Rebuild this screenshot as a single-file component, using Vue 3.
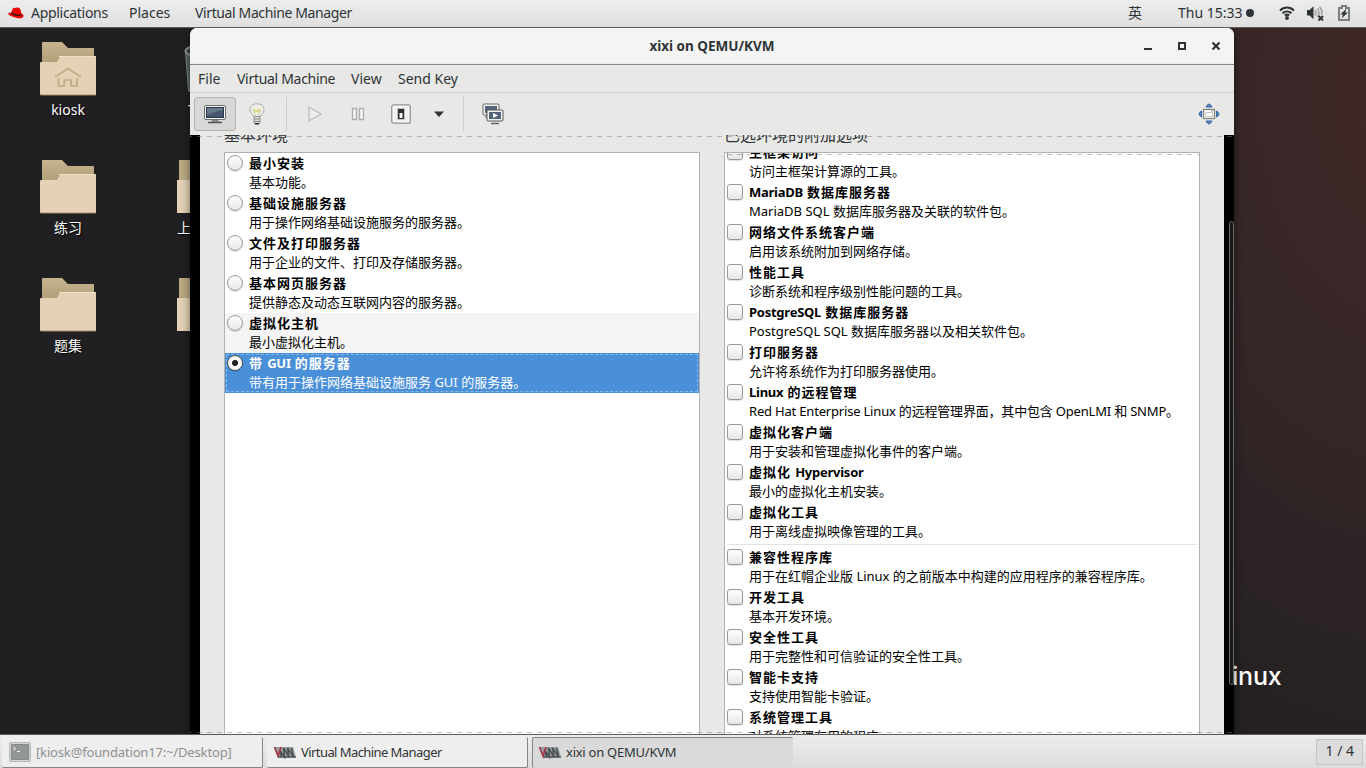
<template>
  <div class="desktop">
    <header class="topbar">
      <svg class="topbar__hat" width="16" height="14" viewBox="0 0 16 14">
        <path d="M3.2 6.8 4.700 2.700C5 1.700 6 1.600 7 1.900c.8.2 1.200 0 2-.3 1.800-.5 3 .4 3.400 2l.9 3.700c1.300.6 2.300 1.600 2.200 2.800-.2 2-2.600 2.600-5.400 2.100C6.400 11.700 1 9.900.3 7.800.1 6.700 1.500 6.500 3.200 6.800Z" fill="#e00" />
        <path d="M3.400 6c1.800 2.200 6 3.300 9.200 2.600l.7-.8.3 1.300c-2.500 2-9 .1-10.600-1.900Z" fill="#161616" />
      </svg>
      <span class="topbar__apps">Applications</span>
      <span class="topbar__places">Places</span>
      <span class="topbar__current">Virtual Machine Manager</span>
      <span class="topbar__input">英</span>
      <span class="topbar__clock">Thu 15:33</span>
      <i class="topbar__dot" />
      <svg class="topbar__wifi" width="16" height="16" viewBox="0 0 16 16" fill="none" stroke="#2e3436" stroke-width="2">
        <path d="M1 5.600C5 1.600 11 1.600 15 5.600M3.500 8.300c2.600-2.500 6.400-2.500 9 0M5.800 10.500c1.400-1.100 3-1.100 4.400 0" />
        <circle cx="8" cy="13" r="1.900" fill="#2e3436" stroke="none" />
      </svg>
      <svg class="topbar__volume" width="17" height="16" viewBox="0 0 17 16" fill="none">
        <path d="M0 5h2.500L6.500 1.200v13L2.500 10.500H0Z" fill="#2e3436" />
        <path d="M8 5.200c1 1.500 1 3.600 0 5.200M10.300 3.500c2 2.600 2 6 .2 8.500M12.500 1.800c2.600 3 2.800 5.700 2 8" stroke="#a5a7a7" stroke-width="1.800" />
        <path d="m11.500 11 4.500 4.500m0-4.500-4.500 4.500" stroke="#2e3436" stroke-width="2" />
      </svg>
      <svg class="topbar__battery" width="12" height="16" viewBox="0 0 12 16">
        <path d="M1 3h3V1h4v2h3v12H1Z" fill="none" stroke="#7b7f7f" stroke-width="2" />
        <path d="M8.500 3.500 2.300 9.500H5L3.500 13.500 10 7.500H7.200Z" fill="#2e3436" />
      </svg>
    </header>

    <main class="workspace">
      <span class="wallpaper-word">inux</span>
      <figure class="trash">
        <svg width="42" height="54" viewBox="0 0 42 54">
          <path d="m1.500 7 3 40q16 5 33 0l3-40Z" fill="#59645f" stroke="#7c8884" />
          <path d="m10 12 2 32m7-30v32m9-32-1 32m7-34-2 32" stroke="#4b5753" />
          <ellipse cx="21" cy="7" rx="19.500" ry="6" fill="#3a4341" stroke="#8e9895" stroke-width="2" />
        </svg>
        <figcaption>Trash</figcaption>
      </figure>
      <div class="icons">
        <figure v-for="icon in icons" :key="icon.label" class="icon">
          <svg width="58" height="56" viewBox="0 0 58 56">
            <defs>
              <linearGradient id="back" x2="0" y2="1">
                <stop stop-color="#c6b48f" /><stop offset=".35" stop-color="#b5a37d" /><stop offset="1" stop-color="#9f8b67" />
              </linearGradient>
            </defs>
            <path d="M3 1.500Q3 1 4 1h19l6 6h25.500q.5 0 .5.500V50H3Z" fill="url(#back)" />
            <path d="M1 22q0-1 1-1h16l3-5.300q.4-.7 1.500-.700H56q1 0 1 1v37.500q0 .5-1 .5H2q-1 0-1-1Z" fill="#e4d1b6" />
            <path d="M1.500 54h55" stroke="#aa8a65" />
            <path d="M20 15.500h36.500" stroke="#f2dfc4" />
            <g v-if="icon.home" fill="none" stroke="#c1aa88" stroke-width="1.700">
              <path d="m16 36 13-8.500L42 36M19.500 37v8h5.700v-6h7v6H38v-8" />
            </g>
          </svg>
          <figcaption>{{ icon.label }}</figcaption>
        </figure>
      </div>
      <div class="icons icons--second">
        <figure v-for="icon in hiddenIcons" :key="icon" class="icon">
          <svg width="58" height="56" viewBox="0 0 58 56">
            <path d="M3 1h20l6 6h26v43H3Z" fill="#bcaa84" />
            <path d="M1 21h17l4-6h35v39H1Z" fill="#e4d1b6" />
          </svg>
          <figcaption>{{ icon }}</figcaption>
        </figure>
      </div>

      <section class="window">
        <div class="titlebar">
          <strong>xixi on QEMU/KVM</strong>
          <div class="titlebar__buttons">
            <svg width="10" height="10" viewBox="0 0 10 10"><path d="M1 7h8v2H1Z" fill="#2e3436" /></svg>
            <svg width="10" height="10" viewBox="0 0 10 10"><path d="M2 2h6v6H2Z" fill="none" stroke="#2e3436" stroke-width="2" /></svg>
            <svg width="10" height="10" viewBox="0 0 10 10"><path d="m1.500 1.500 7 7m0-7-7 7" stroke="#2e3436" stroke-width="2.200" /></svg>
          </div>
        </div>
        <nav class="menubar">
          <span class="menubar__file">File</span>
          <span class="menubar__vm">Virtual Machine</span>
          <span class="menubar__view">View</span>
          <span class="menubar__key">Send Key</span>
        </nav>
        <div class="toolbar">
          <button class="tool tool--active">
            <svg width="24" height="22" viewBox="0 0 24 22">
              <rect x="1.500" y="2.500" width="21" height="14" rx="1.500" fill="#f4f4f2" stroke="#6d706d" />
              <rect x="3.500" y="4.500" width="17" height="10" fill="#465970" stroke="#26364d" />
              <path d="M4 5h16v2Q12 8 4 12Z" fill="#6a7a8d" />
              <path d="M9 17h6l1 2H8Z" fill="#8d908d" /><path d="M5 19.500h14" stroke="#555855" stroke-width="1.500" />
            </svg>
          </button>
          <button class="tool tool--bulb">
            <svg width="16" height="22" viewBox="0 0 16 22">
              <path d="M4.500 13.500C4 11 1 10.500 1 6.800 1 3 4 .8 8 .8s7 2.200 7 6c0 3.700-3 4.200-3.500 6.700Z" fill="#efefe9" stroke="#aaa" />
              <path d="M3.500 5q4.500 3.500 9 0L10 9.500H6Z" fill="#f4e865" /><path d="m6.500 13-2-6q3.500 3 7 0l-2 6" fill="none" stroke="#c8c8b8" />
              <path d="M5 13.500h6V20q-3 2-6 0Z" fill="#dededc" stroke="#92948f" /><path d="M5 16h6M5 18.500h6" stroke="#888a85" />
              <path d="M6 20.700h4" stroke="#333" stroke-width="1.500" />
            </svg>
          </button>
          <i class="toolbar__rule" />
          <svg class="toolbar__play" width="16" height="16" viewBox="0 0 16 16"><path d="M2 1.200 14 8 2 14.800Z" fill="#eee" stroke="#bdbebb" stroke-width="1.300" /></svg>
          <svg class="toolbar__pause" width="14" height="14" viewBox="0 0 14 14"><path d="M1.500 1.500h4v11h-4ZM8.500 1.500h4v11h-4Z" fill="#f3f3f2" stroke="#acaeab" stroke-width="1.300" /></svg>
          <svg class="toolbar__power" width="20" height="20" viewBox="0 0 20 20">
            <rect x=".8" y=".8" width="18.400" height="18.400" rx="2" fill="#fff" stroke="#8f918c" stroke-width="1.300" />
            <rect x="2.500" y="2.500" width="15" height="15" fill="#f0f0ee" />
            <path d="M6 4h8v12H6Z" fill="#c4c5c2" /><path d="M7 5h6v10H7Z" fill="#2c2e2c" /><path d="M8.500 9h3v5h-3Z" fill="#f5f5f3" />
          </svg>
          <svg class="toolbar__arrow" width="10" height="6" viewBox="0 0 10 6"><path d="M0 .5h10L5 6Z" fill="#2e3436" /></svg>
          <i class="toolbar__rule toolbar__rule--last" />
          <svg class="toolbar__clone" width="22" height="22" viewBox="0 0 22 22">
            <rect x="1" y="1" width="16" height="11" rx="1" fill="#f4f4f2" stroke="#666966" />
            <path d="M3 3h12v7H3Z" fill="#53657a" /><path d="M3 14h5M5 12v2" stroke="#666966" />
            <rect x="5" y="7" width="16" height="11" rx="1" fill="#f4f4f2" stroke="#555855" />
            <path d="M7 9h12v7H7Z" fill="#53657a" /><path d="m11 10 5 2.500-5 2.500Z" fill="#fff" />
            <path d="M9 20.500h8" stroke="#666966" stroke-width="1.300" /><path d="M11 18.500h4" stroke="#999" />
          </svg>
          <svg class="toolbar__fullscreen" width="22" height="22" viewBox="0 0 22 22">
            <g fill="#5f87ba" stroke="#3465a4">
              <path d="M8 4q3-6 6 0ZM8 18q3 6 6 0ZM3.500 8v6q-5-3 0-6ZM18.500 8v6q5-3 0-6Z" />
            </g>
            <rect x="5.500" y="6.500" width="11" height="9" fill="#fff" stroke="#82847f" stroke-width="1.300" />
            <path d="M7.500 9.500h7v4h-7Z" fill="#fff" stroke="#c7c8c2" /><path d="M13 8h2" stroke="#aaa" />
          </svg>
        </div>

        <div class="display">
          <div class="installer">
            <div class="pane">
              <h2>基本环境</h2>
              <ul class="list">
                <li
                  v-for="item in environments"
                  :key="item.name"
                  class="row"
                  :class="{ 'row--hover': item.hover, 'row--selected': item.selected }"
                >
                  <i class="mark mark--radio" />
                  <b><span v-for="(part, i) in splitLatin(item.name)" :key="i" :class="{ latin: part.latin }">{{ part.text }}</span></b>
                  <p>{{ item.text }}</p>
                </li>
              </ul>
            </div>
            <div class="pane">
              <h2>已选环境的附加选项</h2>
              <ul class="list list--scrolled">
                <li
                  v-for="item in addons"
                  :key="item.name"
                  class="row"
                  :class="{ 'row--divided': item.divided, 'row--tight': item.tight }"
                >
                  <i class="mark" />
                  <b><span v-for="(part, i) in splitLatin(item.name)" :key="i" :class="{ latin: part.latin }">{{ part.text }}</span></b>
                  <p>{{ item.text }}</p>
                </li>
              </ul>
            </div>
          </div>
          <i class="scrollbar" />
          <i class="dashes" />
          <i class="dashes dashes--bottom" />
        </div>
      </section>
    </main>

    <footer class="taskbar">
      <div class="task task--minimized">
        <svg width="22" height="20" viewBox="0 0 22 20">
          <rect x=".7" y=".7" width="20.600" height="18.600" rx="1" fill="#e0e0df" stroke="#b9bab8" stroke-width="1.300" />
          <path d="M2.500 2.500h17v15h-17Z" fill="#929795" stroke="#858a88" />
          <path d="m4.500 5 2 1.500-2 1.500M8 9.500h3" fill="none" stroke="#fff" />
        </svg>
        <span>[kiosk@foundation17:~/Desktop]</span>
      </div>
      <div v-for="task in tasks" :key="task.title" class="task" :class="{ 'task--active': task.active }">
        <svg width="24" height="14" viewBox="0 0 24 14">
          <path d="m1 2 4 10h18L20 2Z" fill="#9a9ea0" />
          <path d="m8.500 12-2-7 5 7-1-9 5.500 9-1.500-9 6 9-2-9" fill="none" stroke="#4a5256" stroke-width="1.500" />
          <path d="M5 12h18" stroke="#4a4f52" stroke-width="1.500" />
          <path d="m1.500 2 3.500 9 3-9" fill="none" stroke="#a7394a" stroke-width="1.700" />
        </svg>
        <span>{{ task.title }}</span>
      </div>
      <span class="pager">1 / 4</span>
    </footer>
  </div>
</template>

<script setup>
const icons = [
  { label: 'kiosk', home: true },
  { label: '练习' },
  { label: '题集' },
];

const hiddenIcons = ['上课练习', '下载'];

const environments = [
  { name: '最小安装', text: '基本功能。' },
  { name: '基础设施服务器', text: '用于操作网络基础设施服务的服务器。' },
  { name: '文件及打印服务器', text: '用于企业的文件、打印及存储服务器。' },
  { name: '基本网页服务器', text: '提供静态及动态互联网内容的服务器。' },
  { name: '虚拟化主机', text: '最小虚拟化主机。', hover: true },
  { name: '带 GUI 的服务器', text: '带有用于操作网络基础设施服务 GUI 的服务器。', selected: true },
];

const addons = [
  { name: '主框架访问', text: '访问主框架计算源的工具。' },
  { name: 'MariaDB 数据库服务器', text: 'MariaDB SQL 数据库服务器及关联的软件包。' },
  { name: '网络文件系统客户端', text: '启用该系统附加到网络存储。' },
  { name: '性能工具', text: '诊断系统和程序级别性能问题的工具。' },
  { name: 'PostgreSQL 数据库服务器', text: 'PostgreSQL SQL 数据库服务器以及相关软件包。' },
  { name: '打印服务器', text: '允许将系统作为打印服务器使用。' },
  { name: 'Linux 的远程管理', text: 'Red Hat Enterprise Linux 的远程管理界面，其中包含 OpenLMI 和 SNMP。', tight: true },
  { name: '虚拟化客户端', text: '用于安装和管理虚拟化事件的客户端。' },
  { name: '虚拟化 Hypervisor', text: '最小的虚拟化主机安装。' },
  { name: '虚拟化工具', text: '用于离线虚拟映像管理的工具。' },
  { name: '兼容性程序库', text: '用于在红帽企业版 Linux 的之前版本中构建的应用程序的兼容程序库。', divided: true },
  { name: '开发工具', text: '基本开发环境。' },
  { name: '安全性工具', text: '用于完整性和可信验证的安全性工具。' },
  { name: '智能卡支持', text: '支持使用智能卡验证。' },
  { name: '系统管理工具', text: '对系统管理有用的程序。' },
];

const tasks = [
  { title: 'Virtual Machine Manager' },
  { title: 'xixi on QEMU/KVM', active: true },
];

// Latin words keep their own tracking inside the wider CJK titles
function splitLatin(text) {
  return text.match(/[ -~]+|[^ -~]+/g).map((part) => ({ text: part, latin: /^[ -~]/.test(part) }));
}
</script>

<style>
body {
  margin: 0;
  overflow: hidden;
}
</style>

<style scoped>
.desktop {
  display: flex;
  flex-direction: column;
  width: 1366px;
  height: 768px;
  overflow: hidden;
  font: 14px/20px "Noto Sans", "Noto Sans CJK SC", sans-serif;
  color: #2e3436;
  white-space: nowrap;
}
.desktop * {
  box-sizing: border-box;
}
svg {
  display: block;
  flex: none;
}
.topbar {
  display: flex;
  align-items: center;
  flex: none;
  height: 28px;
  padding: 0 16px 1px 8px;
  border-bottom: 1px solid #5c5c5b;
  background: linear-gradient(#ededed, #dfdfdf);
}
.topbar span {
  flex: none;
}
.topbar__apps {
  width: 98px;
  margin-left: 7px;
  letter-spacing: -0.3px;
}
.topbar__places {
  width: 66px;
}
.topbar__current {
  letter-spacing: -0.38px;
}
.topbar__input {
  margin-left: auto;
  width: 50px;
}
.topbar__clock {
  width: 66px;
}
.topbar__dot {
  width: 8px;
  height: 8px;
  margin: 0 25px 0 2px;
  border-radius: 50%;
  background: #2e3436;
}
.topbar__volume {
  margin: 0 14px 0 12px;
}
.workspace {
  position: relative;
  flex: none;
  height: 706px;
  overflow: hidden;
  background: radial-gradient(ellipse 420px 640px at 1400px 70px, #402827, #352627 52%, transparent 100%), linear-gradient(90deg, #202022 0 50%, #252122 80%);
}
.wallpaper-word {
  position: absolute;
  left: 1232px;
  top: 631px;
  font: 500 25px/34px Inter, sans-serif;
  letter-spacing: -0.2px;
  color: #fff;
}
.icons {
  display: flex;
  flex-direction: column;
  gap: 38px;
  width: 136px;
  padding-top: 13px;
}
.icons--second {
  position: absolute;
  top: 118px;
  left: 137px;
}
.icon {
  display: flex;
  flex-direction: column;
  align-items: center;
  height: 80px;
  margin: 0;
  color: #fff;
  text-shadow: 1px 1px 1px #000;
}
.icon figcaption {
  margin-top: 3px;
}
.trash {
  position: absolute;
  left: 184px;
  top: 16px;
  margin: 0;
  color: #fff;
}
.trash figcaption {
  margin: 2px 0 0 4px;
}
.window {
  position: absolute;
  inset: 0 132px 0 190px;
  display: flex;
  flex-direction: column;
  overflow: hidden;
  border-radius: 7px 7px 0 0;
  background: #e8e8e6;
  box-shadow: 0 2px 10px rgba(0, 0, 0, 0.5);
}
.titlebar {
  display: grid;
  grid-template-columns: 1fr auto 1fr;
  align-items: center;
  flex: none;
  height: 37px;
  border-bottom: 1px solid #8b8c87;
  background: linear-gradient(#fff 0 1px, #f4f4f4 1px 34px, #e9e9e9);
}
.titlebar strong {
  grid-column: 2;
  font-size: 13.5px;
}
.titlebar__buttons {
  display: flex;
  justify-content: flex-end;
  gap: 24px;
  padding-right: 13px;
}
.menubar {
  display: flex;
  align-items: center;
  flex: none;
  height: 28px;
  padding-left: 8px;
  border-bottom: 1px solid #cececc;
}
.menubar__file {
  width: 39px;
}
.menubar__vm {
  width: 114px;
  letter-spacing: -0.3px;
}
.menubar__view {
  width: 47px;
}
.toolbar {
  display: flex;
  align-items: center;
  flex: none;
  height: 42px;
  padding: 0 14px 0 4px;
}
.tool {
  display: grid;
  place-items: center;
  width: 42px;
  height: 34px;
  padding: 0;
  border: 1px solid transparent;
  border-radius: 3px;
  background: none;
}
.tool--active {
  border-color: #b4b5b2;
  background: #d7d7d5;
}
.toolbar__rule {
  width: 1px;
  height: 34px;
  margin: 0 20px 0 8px;
  background: #ccccca;
}
.toolbar__pause {
  margin: 0 26px 0 28px;
}
.toolbar__arrow {
  margin: 0 19px 0 23px;
}
.toolbar__rule--last {
  margin: 0 18px 0 0;
}
.toolbar__fullscreen {
  margin-left: auto;
}
.display {
  position: relative;
  flex: 1;
  min-height: 0;
  padding: 0 10px;
  background: #000;
}
.installer {
  display: grid;
  grid-template-columns: 476px 476px;
  gap: 24px;
  height: 599px;
  padding: 0 24px;
  overflow: hidden;
  background: #e8e8e6;
}
.pane h2 {
  height: 17px;
  margin: 0;
  overflow: hidden;
  font-size: 16px;
  font-weight: 400;
  line-height: 0;
  text-indent: 0;
}
.list {
  height: 590px;
  margin: 0;
  padding: 0;
  overflow: hidden;
  border: 1px solid #b2b3b0;
  background: #fff;
  list-style: none;
}
.list--scrolled {
  position: relative;
}
.list--scrolled .row:first-child {
  margin-top: -11px;
}
.list--scrolled::after {
  position: absolute;
  inset: 1px 0 auto;
  height: 1px;
  background: repeating-linear-gradient(90deg, transparent 0 2px, rgba(128, 128, 128, 0.5) 2px 7px, transparent 7px 10px);
  content: "";
}
.row {
  display: grid;
  grid-template-columns: 22px 1fr;
  grid-template-rows: 20px 18px;
  height: 40px;
  padding: 1px 2px;
  color: #000;
  font-size: 13px;
  line-height: 20px;
}
.row b {
  margin-top: -1px;
  letter-spacing: 1px;
}
.row b .latin {
  letter-spacing: -0.25px;
  word-spacing: 1px;
  white-space: pre;
}
.row p {
  grid-column: 2;
  margin: -2px 0 0;
}
.row--tight p {
  letter-spacing: -0.19px;
}
.row--hover {
  background: #f4f4f4;
}
.row--selected {
  background: #4a90d9;
  color: #fff;
  outline: 1px dashed #86b6e6;
  outline-offset: -2px;
}
.row--divided {
  position: relative;
  margin-top: 5px;
}
.row--divided::before {
  position: absolute;
  inset: -3px 2px auto;
  height: 1px;
  background: #e2e2e0;
  content: "";
}
.mark {
  width: 16px;
  height: 16px;
  margin-top: 1px;
  border: 1px solid #989a95;
  border-radius: 3px;
  background: linear-gradient(#fff, #e6e6e5);
  box-shadow: 0 1px 1px rgba(0, 0, 0, 0.12);
}
.mark--radio {
  border-radius: 50%;
}
.row--selected .mark {
  border-color: #555;
  background: radial-gradient(circle, #222 0 2.6px, #f8f8f8 3.4px);
}
.scrollbar {
  position: absolute;
  top: 86px;
  right: 0;
  width: 5px;
  height: 464px;
  border: 1px solid #686a6a;
  border-radius: 3px;
  background: #171a1c;
}
.dashes {
  position: absolute;
  top: 1px;
  left: 0;
  right: 0;
  height: 1px;
  background: repeating-linear-gradient(90deg, rgba(128, 128, 128, 0.5) 0 2px, transparent 2px 7px, rgba(128, 128, 128, 0.5) 7px 10px);
}
.dashes--bottom {
  top: 597px;
}
.taskbar {
  display: flex;
  align-items: center;
  flex: none;
  height: 34px;
  padding: 1px 3px 0 2px;
  border-top: 1px solid #5c5c5b;
  background: linear-gradient(#ededed, #dcdcdc);
}
.task {
  display: flex;
  align-items: center;
  gap: 4px;
  width: 261px;
  height: 31px;
  margin-right: 4px;
  padding: 0 6px;
  border-right: 1px solid #858684;
  border-bottom: 1px solid #858684;
  border-radius: 2px;
  background: #eee;
  font-size: 13px;
  letter-spacing: -0.57px;
}
.task--minimized {
  padding-left: 7px;
  gap: 5px;
  color: #8d9090;
  letter-spacing: -0.16px;
}
.task--active {
  padding: 0 5px 1px;
  border: 0;
  border-top: 1px solid #858684;
  border-left: 1px solid #858684;
  background: #dadada;
  letter-spacing: -0.25px;
}
.pager {
  margin-left: auto;
  padding: 1px 8px 3px;
  border: 1px solid #c6c6c6;
  background: #dcdcdc;
}
</style>
